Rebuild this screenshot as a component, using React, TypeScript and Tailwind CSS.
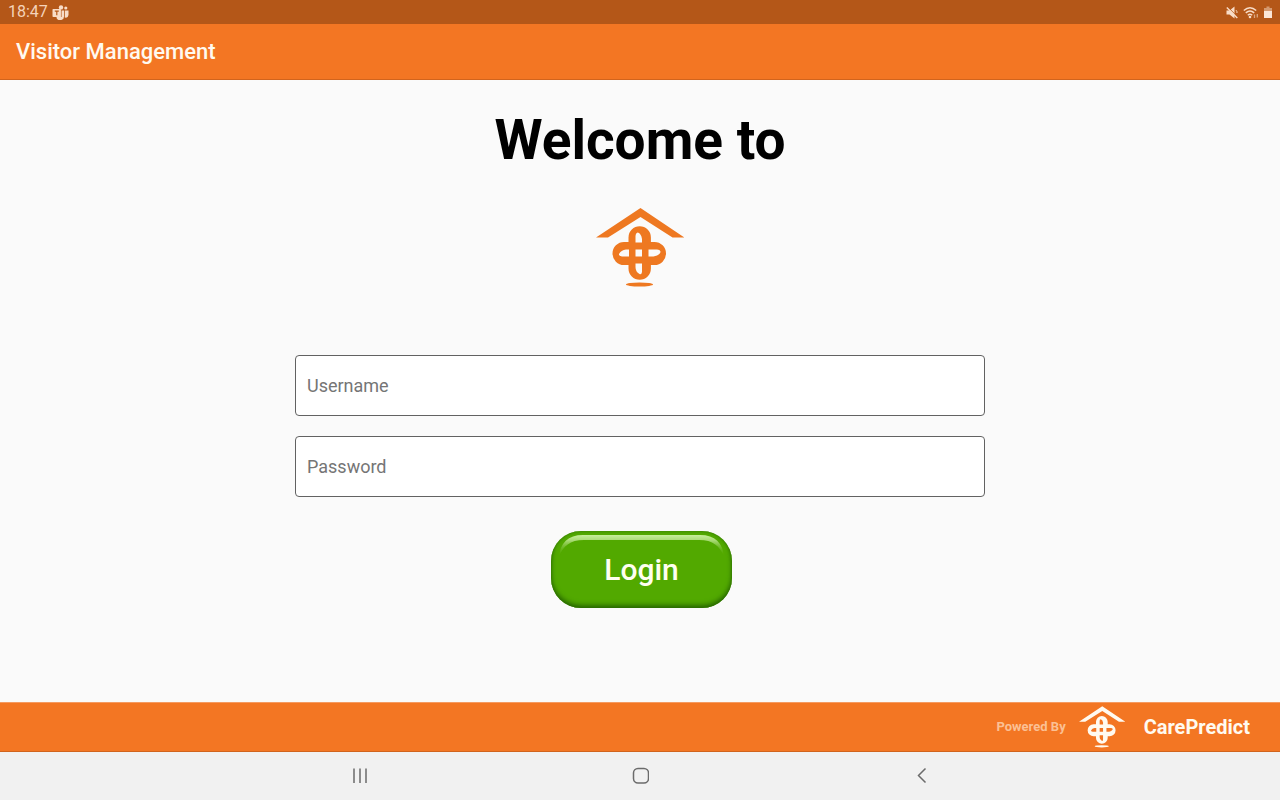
import React from "react";

function HouseLogo({ className }: { className: string }) {
  return (
    <svg viewBox="16 13 88 79" className={className} fill="currentColor" aria-hidden="true">
      <path d="M60.5 13 104.500 42.500H92.500L60.500 22 28 42.500H16Z" />
      <path
        fillRule="evenodd"
        d="M48.500 47V42.500a11.200 11.200 0 0 1 22.400 0V47H74.500a11.500 11.500 0 0 1 0 23H70.900V73.500a11.200 11.200 0 0 1-22.400 0V70H44a11.500 11.500 0 0 1 0-23Z
        M55.500 54.500V61.500H62V54.500Z
        M55.500 47.500H62V44Q61 38 57.500 37.500Q55.500 38 55.500 41Z
        M55.500 68.500H62V77Q61.500 80 59.500 79Q55.500 77 55.500 72Z
        M49 54.500V61.500H42Q38.500 61 39 59Q41 55 46 54.500Z
        M68.500 54.500V61.500H73.500Q80.500 60 80.500 56.500Q80 54.500 77 54.500Z"
      />
      <ellipse cx="59.500" cy="89.500" rx="13.500" ry="2" />
    </svg>
  );
}

function TeamsIcon() {
  return (
    <svg viewBox="0 0 17 15" className="h-[15px] w-[17px]" aria-hidden="true">
      <g fill="#f8dcc7">
        <circle cx="9" cy="2.500" r="2.200" />
        <circle cx="13.800" cy="3" r="1.600" />
        <path d="M12.800 5.500H16.500V10a3 3 0 0 1-3.700 2.500Z" />
        <path d="M6 5.500H12V10.500a4 4 0 0 1-7.500 2.500Z" />
        <rect x="0.500" y="4" width="8.500" height="8" rx="0.800" />
      </g>
      <path d="M2.800 6.200H6.800M4.800 6.200V10.200" stroke="#b45718" strokeWidth="1.200" />
      <path d="M9.400 4.500V12" stroke="#b45718" strokeWidth="0.600" />
    </svg>
  );
}

function MuteIcon() {
  return (
    <svg viewBox="0 0 12 13" className="h-[13px] w-3" aria-hidden="true">
      <path d="M0.500 4.500H3.500L8.500 0.500V12.500L3.500 8.500H0.500Z" fill="#f8dcc7" />
      <path d="M10 4.200Q11.200 5 11 7" fill="none" stroke="#f8dcc7" strokeWidth="1" />
      <path d="M1.500 0.800 12 11.300" stroke="#b45718" strokeWidth="1" />
      <path d="M0.800 1.500 11.300 12" stroke="#f8dcc7" strokeWidth="1.400" />
    </svg>
  );
}

function WifiIcon() {
  return (
    <svg viewBox="0 0 16 13" className="h-[13px] w-4" fill="none" stroke="#f8dcc7" aria-hidden="true">
      <path d="M0.800 4.500Q7 -1 13.200 4.500M2.800 6.900Q7 3 11.200 6.900M4.800 9.200Q7 7.200 9.200 9.200" strokeWidth="1.500" />
      <circle cx="7" cy="11" r="1.300" fill="#f8dcc7" stroke="none" />
      <path d="M11.500 8.500V12M14.300 8V11.500" stroke="#dba680" strokeWidth="1.300" />
    </svg>
  );
}

function BatteryIcon() {
  return (
    <svg viewBox="0 0 8 13" className="h-[13px] w-2" aria-hidden="true">
      <path d="M2.500 0.500H5.500V2H8V5H0V2H2.500Z" fill="#d59a70" />
      <path d="M0 5H8V12H0Z" fill="#fbe6d6" />
    </svg>
  );
}

function Field({ id, label, type }: { id: string; label: string; type: string }) {
  return (
    <div className="relative">
      <input
        id={id}
        type={type}
        placeholder=" "
        className="peer block h-[61px] w-full rounded-[4px] border border-[#626262] bg-white px-[11px] text-[18px] text-black outline-none"
      />
      <label
        htmlFor={id}
        className="pointer-events-none absolute inset-y-0 left-3 flex items-center text-[18px] leading-6 text-[#757575] peer-[:not(:placeholder-shown)]:hidden"
      >
        {label}
      </label>
    </div>
  );
}

export default function App() {
  return (
    <div className="flex min-h-screen flex-col bg-[#fafafa] font-[Roboto,sans-serif]">
      <div className="flex h-6 items-center justify-between bg-[#b45718] pr-2 pl-2">
        <div className="flex items-center gap-1">
          <span className="text-[16px] leading-6 text-[#f5d3ba]">18:47</span>
          <TeamsIcon />
        </div>
        <div className="flex items-center gap-[5px]">
          <MuteIcon />
          <WifiIcon />
          <BatteryIcon />
        </div>
      </div>

      <header className="flex h-14 items-center border-b border-[#d1641d] bg-[#f37623] px-4">
        <span className="text-[22px] leading-7 font-medium text-[#fffaf0]">Visitor Management</span>
      </header>

      <main className="flex flex-1 flex-col items-center px-6 pt-7">
        <h1 className="text-[55px] leading-[64px] font-bold text-black">Welcome to</h1>
        <HouseLogo className="mt-9 h-[79px] w-[88px] text-[#ee7821]" />
        <form className="mt-[68px] flex w-full max-w-[690px] flex-col gap-5" onSubmit={(e) => e.preventDefault()}>
          <Field id="username" label="Username" type="text" />
          <Field id="password" label="Password" type="password" />
          <button
            type="submit"
            className="relative mt-[14px] ml-[3px] h-[77px] w-[181px] self-center rounded-[30px] bg-[#52a900] text-[30px] font-medium text-[#fffff0] shadow-[inset_0_-3px_5px_#286800,inset_0_0_3px_#347d00]"
          >
            <svg viewBox="0 0 181 77" className="absolute inset-0 h-full w-full" fill="none" aria-hidden="true">
              <defs>
                <linearGradient id="shine" x1="0" y1="4" x2="0" y2="26" gradientUnits="userSpaceOnUse">
                  <stop offset="0" stopColor="#c6ef9b" />
                  <stop offset="0.250" stopColor="#a9da75" />
                  <stop offset="1" stopColor="#52a900" stopOpacity="0" />
                </linearGradient>
                <filter id="soften" x="-5%" y="-20%" width="110%" height="140%">
                  <feGaussianBlur stdDeviation="0.700" />
                </filter>
              </defs>
              <path
                d="M8 26C9 12 17 4 32 4H149C164 4 172 12 173 26C169 15 162 9 148 9H33C19 9 12 15 8 26Z"
                fill="url(#shine)"
                filter="url(#soften)"
              />
            </svg>
            <span className="relative">Login</span>
          </button>
        </form>
      </main>

      <footer className="flex h-[50px] items-center justify-end border-t border-b border-t-[#f59a60] border-b-[#d1641d] bg-[#f37623] pr-[30px]">
        <span className="text-[13px] font-bold text-[#fbc094]">Powered By</span>
        <HouseLogo className="ml-[13px] h-[42px] w-[46px] text-[#fffaf0]" />
        <span className="ml-[19px] text-[20px] font-bold text-[#fffaf0]">CarePredict</span>
      </footer>

      <nav className="flex h-12 items-center justify-center gap-[263px] bg-[#f1f1f1] text-[#6b6b6b]">
        <button type="button" aria-label="Recent apps">
          <svg viewBox="0 0 18 18" className="size-[18px]" stroke="currentColor" strokeWidth="1.500" aria-hidden="true">
            <path d="M4 1.500V16M10 1.500V16M16 1.500V16" />
          </svg>
        </button>
        <button type="button" aria-label="Home">
          <svg viewBox="0 0 18 18" className="size-[18px]" fill="none" stroke="currentColor" strokeWidth="1.500" aria-hidden="true">
            <rect x="2.500" y="1.500" width="15" height="14.500" rx="4.500" />
          </svg>
        </button>
        <button type="button" aria-label="Back">
          <svg viewBox="0 0 18 18" className="size-[18px]" fill="none" stroke="currentColor" strokeWidth="1.500" aria-hidden="true">
            <path d="M13.500 1.500 6.500 8.500 13.500 15.500" />
          </svg>
        </button>
      </nav>
    </div>
  );
}
